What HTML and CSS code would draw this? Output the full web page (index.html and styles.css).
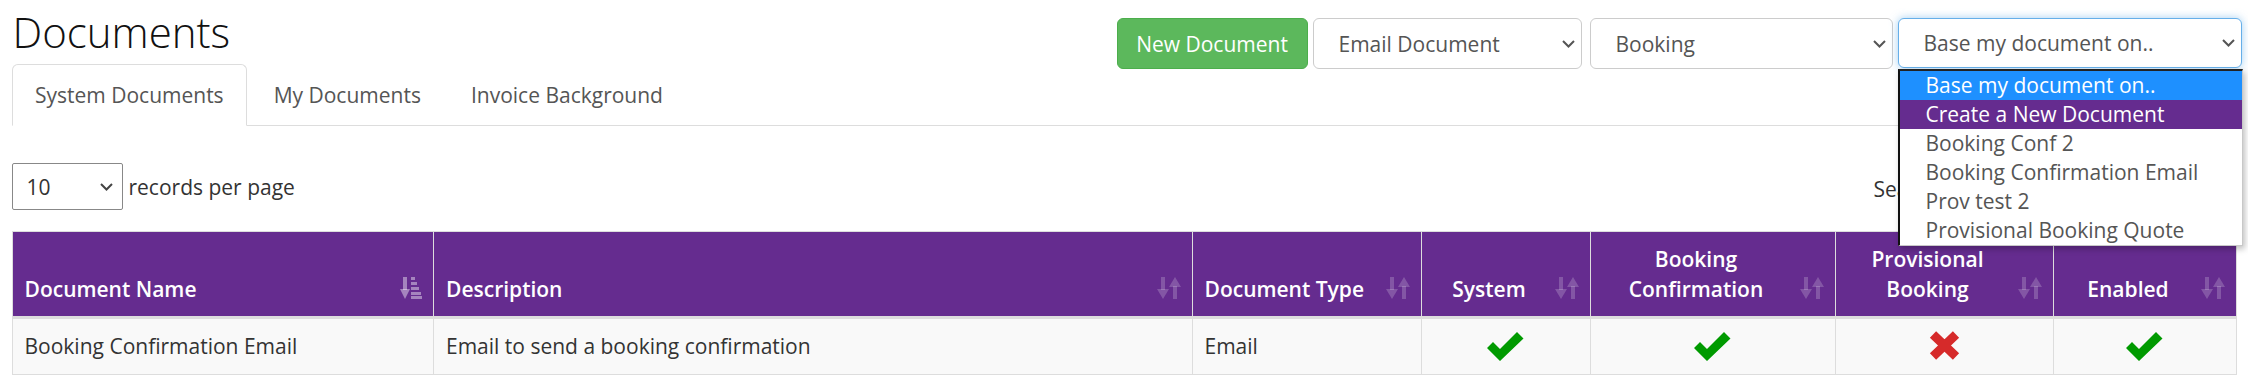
FILE: index.html
```html
<!DOCTYPE html>
<html lang="en">
<head>
<meta charset="utf-8">
<title>Documents</title>
<link rel="stylesheet" href="styles.css">
</head>
<body>
<div class="page">
  <div class="top">
    <h1 class="title">Documents</h1>
    <div class="toolbar">
      <button class="btn-new">New Document</button>
      <div class="sel sel-email"><span>Email Document</span><svg class="chev" viewBox="0 0 13 8"><path d="M1 1l5.5 5.5L12 1"/></svg></div>
      <div class="sel sel-booking"><span>Booking</span><svg class="chev" viewBox="0 0 13 8"><path d="M1 1l5.5 5.5L12 1"/></svg></div>
      <div class="sel-wrap">
        <div class="sel sel-base focus"><span>Base my document on..</span><svg class="chev" viewBox="0 0 13 8"><path d="M1 1l5.5 5.5L12 1"/></svg></div>
        <ul class="dropdown">
          <li class="opt hl-blue">Base my document on..</li>
          <li class="opt hl-purple">Create a New Document</li>
          <li class="opt">Booking Conf 2</li>
          <li class="opt">Booking Confirmation Email</li>
          <li class="opt">Prov test 2</li>
          <li class="opt">Provisional Booking Quote</li>
        </ul>
      </div>
    </div>
  </div>

  <ul class="tabs">
    <li class="tab active">System Documents</li>
    <li class="tab">My Documents</li>
    <li class="tab">Invoice Background</li>
  </ul>

  <div class="controls">
    <div class="length">
      <div class="sel sel-len"><span>10</span><svg class="chev" viewBox="0 0 13 8"><path d="M1 1l5.5 5.5L12 1"/></svg></div>
      <span class="len-label">records per page</span>
    </div>
    <div class="search">
      <span>Search:</span>
      <div class="search-input"></div>
    </div>
  </div>

  <table class="grid">
    <colgroup>
      <col class="c1"><col class="c2"><col class="c3"><col class="c4"><col class="c5"><col class="c6"><col class="c7">
    </colgroup>
    <thead>
      <tr>
        <th class="left">Document Name<svg class="sort active" viewBox="0 0 22 22"><rect x="3" y="0" width="4" height="13"/><path d="M0 12h10l-5 10z"/><rect x="11" y="0" width="4" height="3"/><rect x="11" y="5" width="6" height="3"/><rect x="11" y="10" width="8" height="3"/><rect x="11" y="15" width="10" height="3"/><rect x="11" y="19" width="11" height="3"/></svg></th>
        <th class="left">Description<svg class="sort" viewBox="0 0 24 22"><rect x="4" y="0" width="4" height="13"/><path d="M0 12h12l-6 10z"/><path d="M12 10h12l-6-10z"/><rect x="16" y="9" width="4" height="13"/></svg></th>
        <th class="left">Document Type<svg class="sort" viewBox="0 0 24 22"><rect x="4" y="0" width="4" height="13"/><path d="M0 12h12l-6 10z"/><path d="M12 10h12l-6-10z"/><rect x="16" y="9" width="4" height="13"/></svg></th>
        <th>System<svg class="sort" viewBox="0 0 24 22"><rect x="4" y="0" width="4" height="13"/><path d="M0 12h12l-6 10z"/><path d="M12 10h12l-6-10z"/><rect x="16" y="9" width="4" height="13"/></svg></th>
        <th>Booking<br>Confirmation<svg class="sort" viewBox="0 0 24 22"><rect x="4" y="0" width="4" height="13"/><path d="M0 12h12l-6 10z"/><path d="M12 10h12l-6-10z"/><rect x="16" y="9" width="4" height="13"/></svg></th>
        <th>Provisional<br>Booking<svg class="sort" viewBox="0 0 24 22"><rect x="4" y="0" width="4" height="13"/><path d="M0 12h12l-6 10z"/><path d="M12 10h12l-6-10z"/><rect x="16" y="9" width="4" height="13"/></svg></th>
        <th>Enabled<svg class="sort" viewBox="0 0 24 22"><rect x="4" y="0" width="4" height="13"/><path d="M0 12h12l-6 10z"/><path d="M12 10h12l-6-10z"/><rect x="16" y="9" width="4" height="13"/></svg></th>
      </tr>
    </thead>
    <tbody>
      <tr>
        <td>Booking Confirmation Email</td>
        <td>Email to send a booking confirmation</td>
        <td>Email</td>
        <td class="center"><svg class="ok" viewBox="0 0 37 31"><path d="M0 18L6 12L13 19L30 2L36.5 8.5L13 31Z"/></svg></td>
        <td class="center"><svg class="ok" viewBox="0 0 37 31"><path d="M0 18L6 12L13 19L30 2L36.5 8.5L13 31Z"/></svg></td>
        <td class="center"><svg class="no" viewBox="0 0 33 31"><path d="M5 4.5L28 26.5M28 4.5L5 26.5"/></svg></td>
        <td class="center"><svg class="ok" viewBox="0 0 37 31"><path d="M0 18L6 12L13 19L30 2L36.5 8.5L13 31Z"/></svg></td>
      </tr>
    </tbody>
  </table>
</div>
</body>
</html>
```

FILE: styles.css
```css
* { box-sizing: border-box; }

html, body {
  margin: 0;
  padding: 0;
  background: #fff;
}

body {
  font-family: "Open Sans", "Noto Sans", "Liberation Sans", sans-serif;
  font-size: 21px;
  line-height: 30px;
  color: #333;
}

.page {
  width: 2248px;
  padding: 0 12.5px 0 11.5px;
}

/* top bar */
.top {
  display: flex;
  justify-content: space-between;
  align-items: flex-start;
  height: 64px;
}

.title {
  margin: 9px 0 0 1px;
  font-size: 42px;
  line-height: 46px;
  font-weight: 300;
  color: #111;
}

.toolbar {
  display: flex;
  align-items: flex-start;
  margin-top: 18px;
  margin-right: -6px;
}

.btn-new {
  height: 51px;
  width: 191px;
  padding: 0;
  margin: 0;
  border: 1px solid #4cae4c;
  border-radius: 6px;
  background: #5cb85c;
  color: #fff;
  font-family: inherit;
  font-size: 21px;
  line-height: 30px;
}

.sel {
  display: flex;
  align-items: center;
  justify-content: space-between;
  height: 51px;
  padding: 0 6px 0 25px;
  border: 1px solid #ccc;
  border-radius: 6px;
  background: #fff;
  color: #555;
  font-size: 21px;
}

.chev {
  width: 13px;
  height: 8px;
  fill: none;
  stroke: #555;
  stroke-width: 2;
}

.sel-email { width: 269px; margin-left: 5px; }
.sel-booking { width: 303px; margin-left: 8px; }

.sel-wrap {
  position: relative;
  margin-left: 5px;
}

.sel-base {
  width: 344px;
  height: 50px;
}

.sel-base.focus {
  border-color: #66afe9;
  box-shadow: 0 0 8px rgba(102, 175, 233, 0.6);
}

.dropdown {
  position: absolute;
  z-index: 10;
  top: 51px;
  left: 0;
  width: 345px;
  margin: 0;
  padding: 0;
  list-style: none;
  background: #fff;
  border-top: 2px solid #222;
  border-left: 2px solid #111;
  border-right: 1px solid #c8c8c8;
  border-bottom: 1px solid #c8c8c8;
  box-shadow: 2px 3px 6px rgba(0, 0, 0, 0.25);
}

.opt {
  height: 29px;
  line-height: 29px;
  padding-left: 26px;
  color: #555;
  white-space: nowrap;
}

.hl-blue { background: #1e90ff; color: #fff; }
.hl-purple { background: #652c8f; color: #fff; }

/* tabs */
.tabs {
  display: flex;
  margin: 0;
  padding: 0;
  list-style: none;
  border-bottom: 1px solid #ddd;
}

.tab {
  margin: 0 3px -1px 0;
  padding: 15px 22.5px;
  border: 1px solid transparent;
  border-radius: 6px 6px 0 0;
  color: #555;
  line-height: 30px;
  white-space: nowrap;
}

.tab.active {
  background: #fff;
  border-color: #ddd #ddd transparent;
}

/* controls */
.controls {
  display: flex;
  justify-content: space-between;
  align-items: center;
  margin-top: 37px;
  height: 47px;
}

.length {
  display: flex;
  align-items: center;
}

.sel-len {
  width: 111px;
  height: 47px;
  padding: 0 9px 0 14px;
  border: 1px solid #888;
  border-radius: 2px;
  color: #333;
}

.sel-len .chev { stroke: #444; }

.len-label {
  margin-left: 6px;
}

.search {
  display: flex;
  align-items: center;
  padding-top: 5px;
}

.search-input {
  width: 282px;
  height: 45px;
  margin-left: 8px;
  border: 1px solid #ccc;
  border-radius: 6px;
}

/* table */
.grid {
  width: 2224px;
  margin-top: 21px;
  border-collapse: collapse;
  table-layout: fixed;
  border: 1px solid #ddd;
}

.c1 { width: 421.5px; }
.c2 { width: 758.5px; }
.c3 { width: 229px; }
.c4 { width: 169px; }
.c5 { width: 245px; }
.c6 { width: 218px; }
.c7 { width: 183px; }

.grid th {
  position: relative;
  padding: 12px 45px 12px 12px;
  background: #652c8f;
  color: #fff;
  font-weight: 600;
  text-align: center;
  vertical-align: bottom;
  line-height: 30px;
  border-left: 1px solid #ddd;
  border-bottom: 3px solid #ddd;
}

.grid th.left { text-align: left; }

.sort {
  position: absolute;
  right: 11px;
  bottom: 17px;
  width: 24px;
  height: 22px;
  fill: rgba(255, 255, 255, 0.2);
}

.sort.active {
  width: 22px;
  right: 11px;
  fill: rgba(255, 255, 255, 0.42);
}

.grid td {
  padding: 12px;
  background: #f9f9f9;
  border: 1px solid #ddd;
  line-height: 30px;
  vertical-align: top;
}

.grid td.center {
  text-align: center;
  padding-top: 11px;
  padding-bottom: 13px;
}

.ok {
  display: inline-block;
  width: 37px;
  height: 31px;
  vertical-align: top;
  fill: #009a00;
}

.no {
  display: inline-block;
  width: 33px;
  height: 31px;
  vertical-align: top;
  fill: none;
  stroke: #d62a2a;
  stroke-width: 9;
}
```
